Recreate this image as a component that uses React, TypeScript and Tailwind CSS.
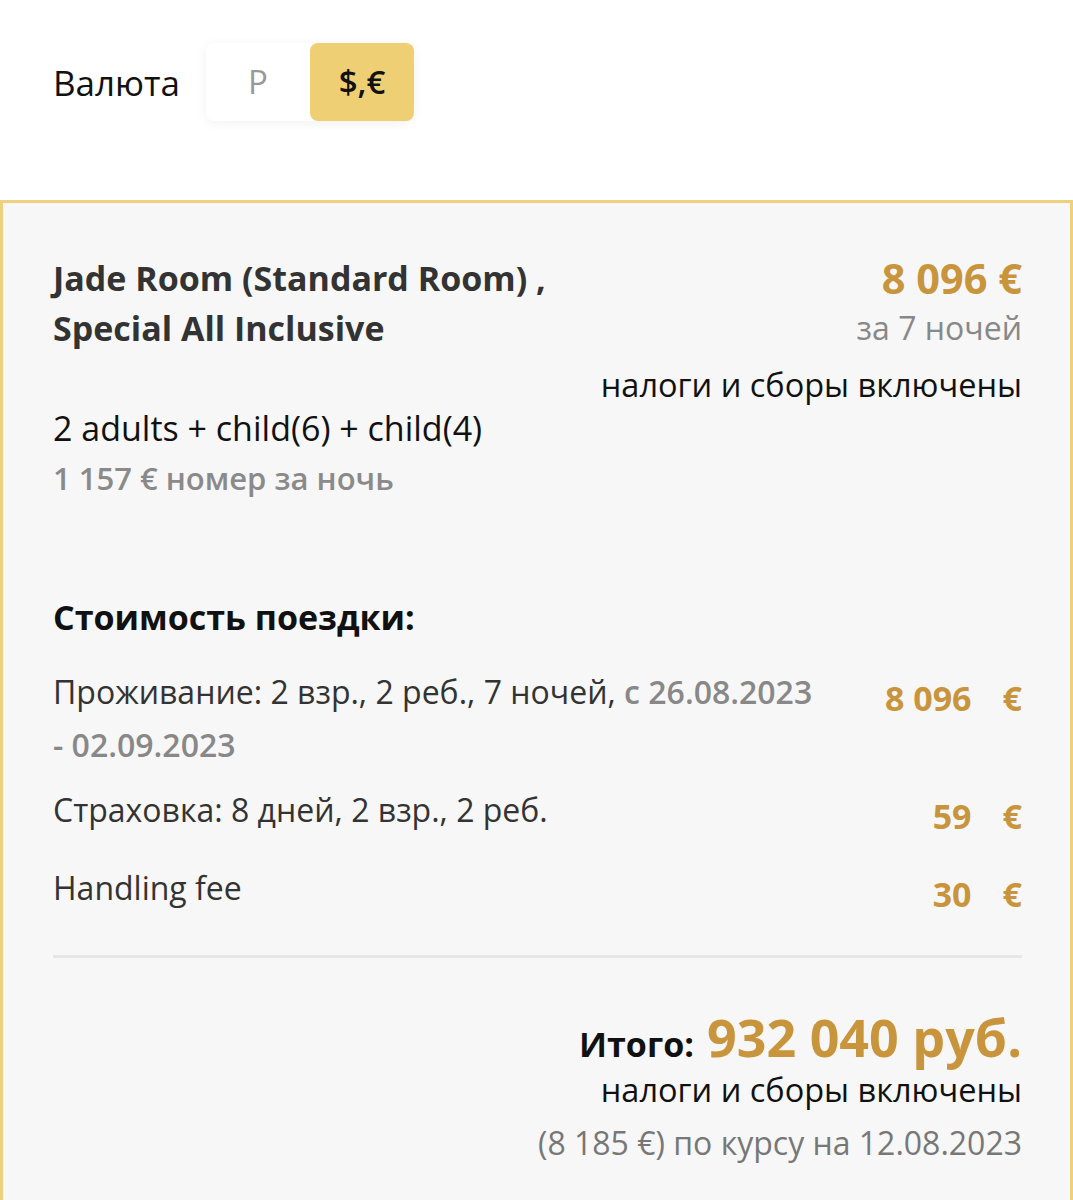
import React from 'react';

const gold = 'text-[#c8953d]';

const TripRow: React.FC<{ children: React.ReactNode; amount: string; className?: string }> = ({ children, amount, className }) => (
  <div className={`flex justify-between items-start ${className ?? ''}`}>
    <p className="flex-1 pr-[60px] text-[32px] leading-[53px] text-[#333]">{children}</p>
    <div className={`flex gap-[31px] text-[34px] leading-[53px] font-bold ${gold} mt-[7px] whitespace-nowrap`}>
      <span>{amount}</span>
      <span>€</span>
    </div>
  </div>
);

export default function App() {
  return (
    <div className="min-h-[1200px] bg-white font-['Open_Sans',sans-serif]">
      <div className="flex items-center pt-[43px] pl-[53px]">
        <span className="text-[35px] text-[#111] leading-none">Валюта</span>
        <div className="ml-[26px] flex rounded-lg bg-white shadow-[0_2px_12px_rgba(0,0,0,0.06)]">
          <button className="w-[104px] h-[78px] text-[33px] font-medium text-[#999]">Р</button>
          <button className="w-[104px] h-[78px] rounded-lg bg-[#efcf74] text-[33px] font-semibold text-[#111]">$,€</button>
        </div>
      </div>

      <div className="mt-[79px] border-[3px] border-b-0 border-[#edd17e] bg-[#f7f7f7] pl-[50px] pr-[48px] pt-[50px] pb-[40px]">
        <div className="flex justify-between items-start">
          <h2 className="text-[34px] leading-[50px] font-bold text-[#333]">
            Jade Room (Standard Room) ,<br />Special All Inclusive
          </h2>
          <div className="text-right">
            <div className={`text-[41.5px] leading-[50px] font-bold ${gold}`}>8 096 €</div>
            <div className="text-[32px] leading-[50px] text-[#888]">за 7 ночей</div>
            <div className="text-[32.5px] leading-[64px] font-medium text-[#111]">налоги и сборы включены</div>
          </div>
        </div>

        <div className="-mt-[14px]">
          <p className="text-[34px] leading-[50px] text-[#111]">2 adults + child(6) + child(4)</p>
          <p className="text-[31px] leading-[50px] font-semibold text-[#8a8a8a]">1 157 € номер за ночь</p>
        </div>

        <h3 className="mt-[89px] text-[34px] leading-[50px] font-bold text-[#111]">Стоимость поездки:</h3>

        <TripRow className="mt-[23px]" amount="8 096">
          Проживание: 2 взр., 2 реб., 7 ночей, <span className="font-semibold text-[#888]">с 26.08.2023 {'-\u00a002.09.2023'}</span>
        </TripRow>
        <TripRow className="mt-[12px]" amount="59">
          Страховка: 8 дней, 2 взр., 2 реб.
        </TripRow>
        <TripRow className="mt-[18px]" amount="30">
          Handling fee
        </TripRow>

        <div className="mt-[34px] h-[3px] bg-[#e6e6e6]" />

        <div className="mt-[47px] text-right">
          <div className="flex justify-end items-baseline gap-[13px]">
            <span className="text-[34px] font-bold text-[#111]">Итого:</span>
            <span className={`text-[52px] leading-[64px] font-bold ${gold}`}>932 040 руб.</span>
          </div>
          <div className="-mt-[5px] text-[32.5px] leading-[50px] font-medium text-[#111]">налоги и сборы включены</div>
          <div className="text-[32px] leading-[56px] text-[#777]">(8 185 €) по курсу на 12.08.2023</div>
        </div>
      </div>
    </div>
  );
}
